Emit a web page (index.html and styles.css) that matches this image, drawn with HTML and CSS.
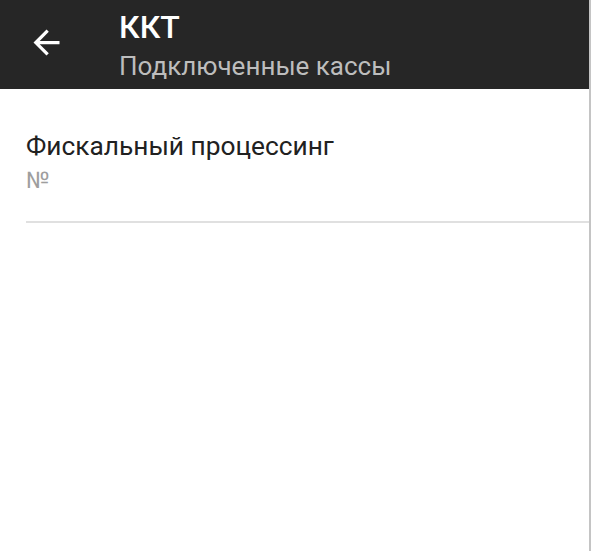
FILE: index.html
```html
<!DOCTYPE html>
<html lang="ru">
<head>
  <meta charset="UTF-8" />
  <meta name="viewport" content="width=device-width, initial-scale=1.0"/>
  <title>ККТ</title>
  <link rel="stylesheet" href="styles.css">
</head>
<body>
  <div class="screen">
    <header class="toolbar">
      <button class="back-btn" aria-label="Назад">
        <svg viewBox="0 0 24 24" width="39" height="39">
          <path d="M20 11H7.83l5.59-5.59L12 4l-8 8 8 8 1.41-1.41L7.83 13H20v-2z" fill="#fff"/>
        </svg>
      </button>
      <div class="toolbar-titles">
        <h1>ККТ</h1>
        <p>Подключенные кассы</p>
      </div>
    </header>

    <ul class="kkt-list">
      <li class="kkt-item">
        <div class="kkt-name">Фискальный процессинг</div>
        <div class="kkt-number">№</div>
      </li>
    </ul>
  </div>
</body>
</html>
```

FILE: styles.css
```css
body {
  margin: 0;
  font-family: Roboto, "Noto Sans", sans-serif;
  background: #fff;
}
.screen {
  height: 551px;
  border-right: 2px solid #c4c4c4;
  box-sizing: border-box;
}
.toolbar {
  height: 89px;
  background: #262626;
  display: flex;
  align-items: flex-start;
}
.back-btn {
  background: none;
  border: none;
  padding: 0;
  margin: 23px 0 0 27px;
  width: 39px;
  height: 39px;
  cursor: pointer;
}
.back-btn svg {
  display: block;
}
.toolbar-titles {
  margin-left: 53px;
  padding-top: 8px;
}
.toolbar-titles h1 {
  margin: 0;
  color: #fff;
  font-size: 32px;
  font-weight: 500;
  line-height: 38px;
}
.toolbar-titles p {
  margin: 3px 0 0;
  color: #bdbdbd;
  font-size: 26px;
  line-height: 34px;
}
.kkt-list {
  list-style: none;
  margin: 0;
  padding: 0 0 0 26px;
}
.kkt-item {
  padding: 41px 0 27px;
  border-bottom: 2px solid #e0e0e0;
}
.kkt-name {
  color: #212121;
  font-size: 26.3px;
  line-height: 32px;
}
.kkt-number {
  margin-top: 6px;
  color: #9e9e9e;
  font-size: 23px;
  line-height: 26px;
}
```
